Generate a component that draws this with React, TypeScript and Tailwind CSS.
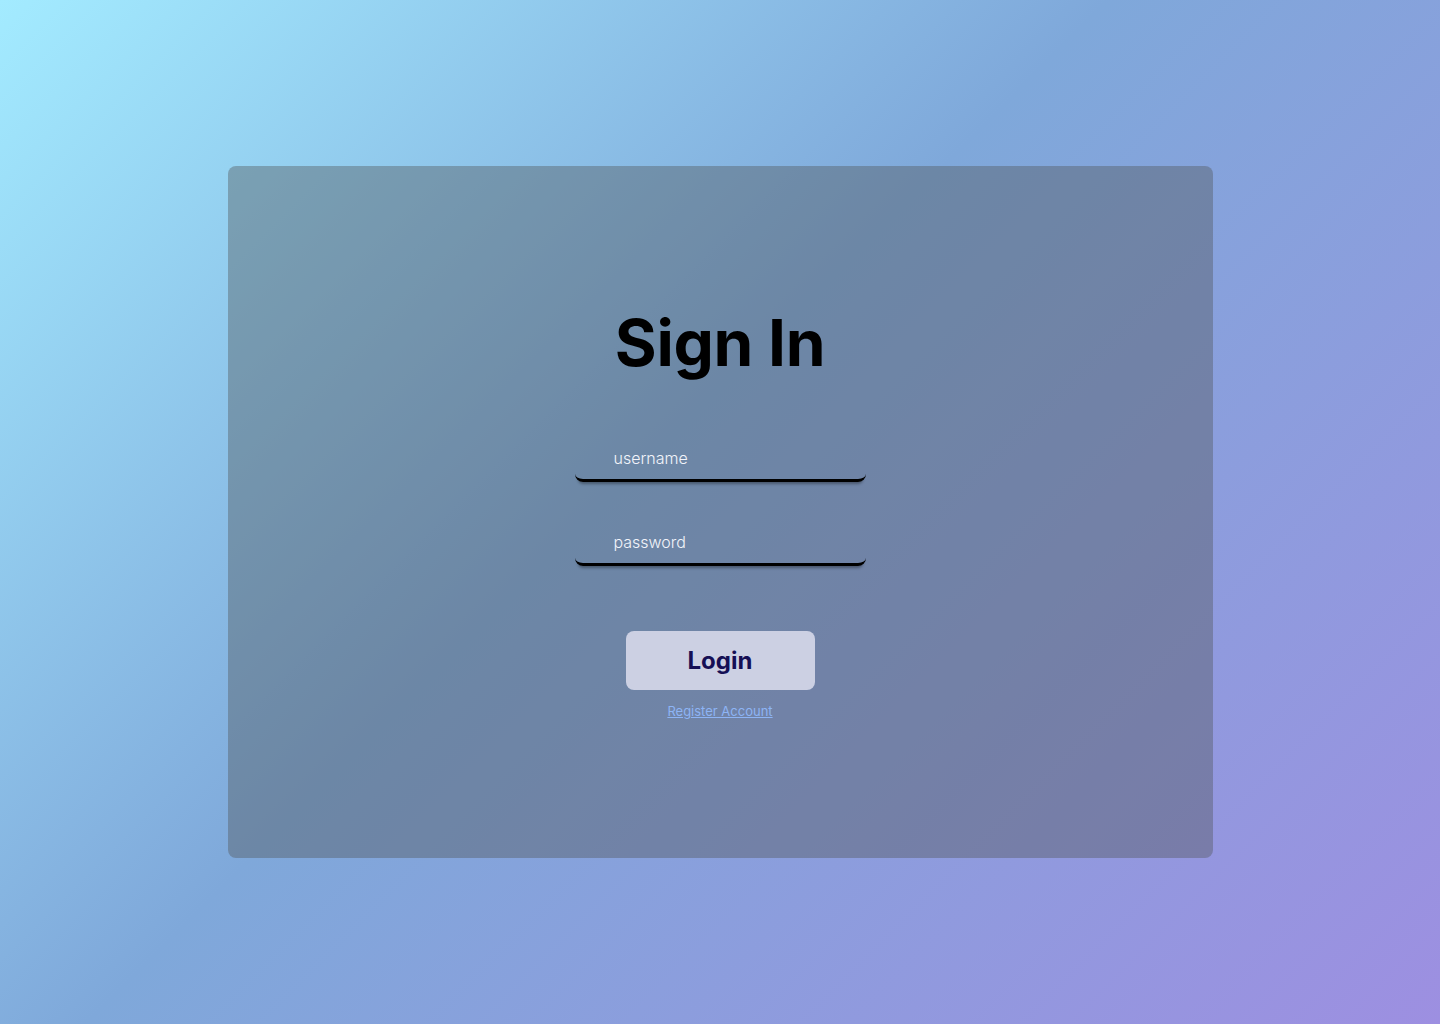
import React from "react";

export default function App() {
  return (
    <div
      className="w-full h-[1024px] flex items-center justify-center bg-[linear-gradient(135deg,#a3ebff_0%,#7fa8da_45%,#9d8fe1_100%)]"
      style={{ fontFamily: "Inter, 'Noto Sans', sans-serif" }}
    >
      <div className="w-[985px] h-[692px] rounded-lg bg-[rgba(80,84,88,0.4)] flex flex-col items-center pt-[138px]">
        <h1 className="text-[64px] leading-[78px] font-bold text-black tracking-[-0.3px]">Sign In</h1>
        <div className="mt-[64px] flex flex-col gap-[48px]">
          <input
            type="text"
            placeholder="username"
            className="w-[291px] h-[36px] bg-transparent border-b-[3px] border-black rounded-b-[8px] shadow-[0_5px_3px_-3px_rgba(0,0,0,0.35)] pl-[39px] pb-[10px] text-[16px] font-light text-white placeholder:text-[#f2f4fa] outline-none"
          />
          <input
            type="password"
            placeholder="password"
            className="w-[291px] h-[36px] bg-transparent border-b-[3px] border-black rounded-b-[8px] shadow-[0_5px_3px_-3px_rgba(0,0,0,0.35)] pl-[39px] pb-[10px] text-[16px] font-light text-white placeholder:text-[#f2f4fa] outline-none"
          />
        </div>
        <button className="mt-[65px] w-[189px] h-[59px] rounded-lg bg-[#ccd0e3] text-[24px] font-bold text-[#150f55]">
          Login
        </button>
        <a href="#" className="mt-[12px] text-[13px] text-[#8db4f5] underline">
          Register Account
        </a>
      </div>
    </div>
  );
}
